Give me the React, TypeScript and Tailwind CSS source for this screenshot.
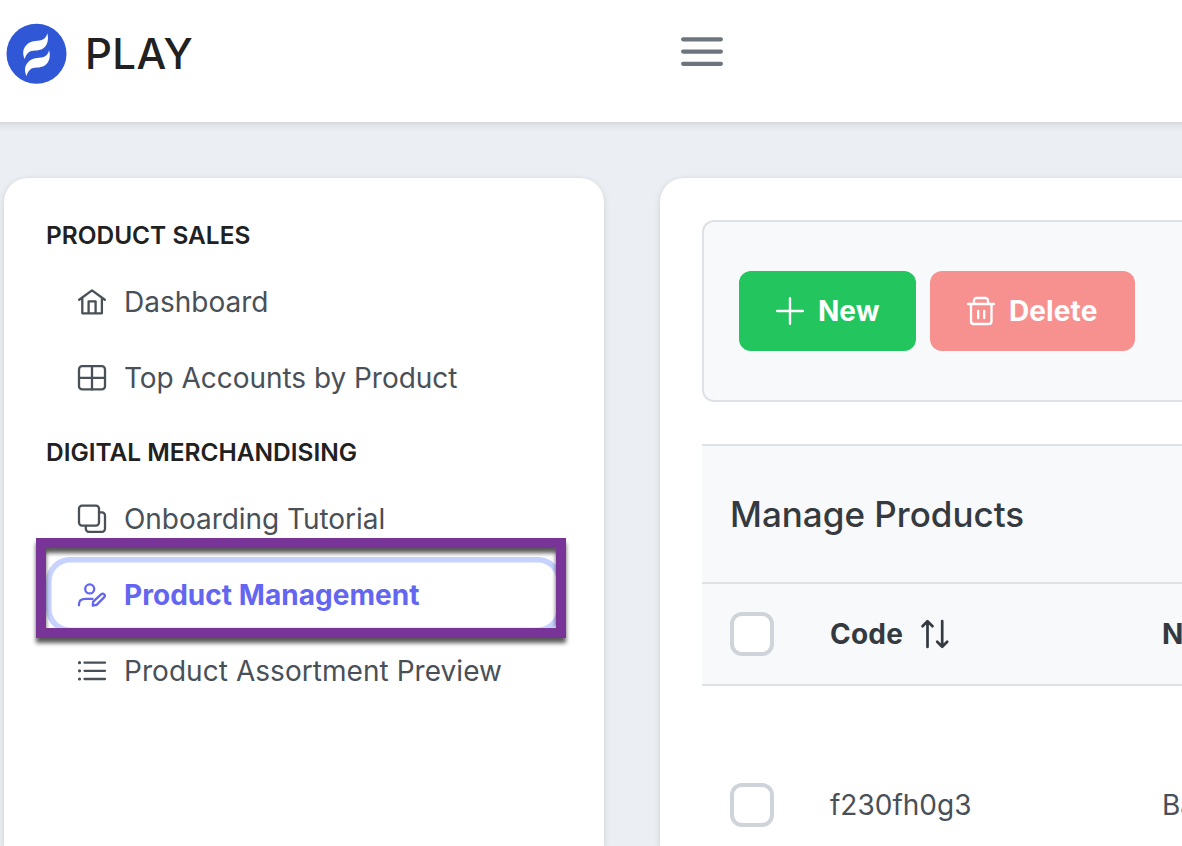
import React from 'react';

type IconProps = { className?: string; children: React.ReactNode };

function Icon({ className = '', children }: IconProps) {
  return (
    <svg
      viewBox="0 0 28 28"
      className={`h-7 w-7 shrink-0 overflow-visible ${className}`}
      fill="none"
      stroke="currentColor"
      strokeWidth="2.3"
      strokeLinecap="round"
      strokeLinejoin="round"
      aria-hidden="true"
    >
      {children}
    </svg>
  );
}

const HomeIcon = () => (
  <Icon>
    <path d="M1.2 11.8 14 2.4l12.8 9.4M4.3 9.8v15.500h19.600V9.800M10.600 25V13.400h7V25" />
  </Icon>
);

const TableIcon = () => (
  <Icon>
    <rect x="1" y="2.2" width="26" height="23.2" rx="3.2" />
    <path d="M14 2.200v23.200M1 13.800h26" />
  </Icon>
);

const CloneIcon = () => (
  <Icon>
    <rect x="1" y="0.6" width="20" height="20" rx="3" />
    <path d="M21 7.400h3a3 3 0 0 1 3 3v13.400a3 3 0 0 1-3 3H10.800a3 3 0 0 1-3-3v-3" />
  </Icon>
);

const UserEditIcon = () => (
  <Icon>
    <circle cx="11.7" cy="7.9" r="4.5" />
    <path d="M1 24.300v-1.200c0-3.400 2.600-5.300 6.600-5.300h7" />
    <path d="m14.800 24.700.4-4.100 7.900-7.300c2.300-1.700 4.800.7 3.200 2.800l-7.700 7.800z" />
  </Icon>
);

const ListIcon = () => (
  <Icon>
    <path d="M6.500 5.700h20.500M6.500 13.800h20.500M6.500 22h20.500" />
    <path d="M1.500 5.700h.01M1.500 13.800h.01M1.500 22h.01" strokeWidth="3.2" />
  </Icon>
);

const PlusIcon = () => (
  <Icon>
    <path d="M14 1.200v25.600M1.200 14h25.600" strokeWidth="2.4" />
  </Icon>
);

const TrashIcon = () => (
  <Icon>
    <path d="M1 7h26M7 7V3.500a2.500 2.500 0 0 1 2.500-2.500h9a2.500 2.500 0 0 1 2.500 2.500V7M4 7v17.200a2.800 2.800 0 0 0 2.800 2.800h14.900a2.800 2.800 0 0 0 2.800-2.800V7M11.200 13.800v7.400M17.200 13.800v7.400" />
  </Icon>
);

const SortIcon = () => (
  <Icon>
    <path d="M6.500 27V1.500M1.500 6.300l5-5 5 5M21.200 1v25.500M16.200 21.700l5 5 5-5" strokeWidth="2.7" />
  </Icon>
);

const flame =
  'M42.3 10.3C44 16 42.5 23 38 25.5C33 28.8 27 26.5 23.5 29.5C21.3 31.3 20.5 33.5 19.7 36C17.5 31 17.5 26 21.5 22C25.5 17.5 31.5 18.3 36 17.3C39.5 16.3 41.5 14 42.3 10.3Z';

function Logo() {
  return (
    <svg viewBox="0 0 62 62" className="h-[62px] w-[62px]" aria-hidden="true">
      <circle cx="31.5" cy="30.8" r="30" fill="#3057d5" />
      <g fill="#fff">
        <path d={flame} />
        <path d={flame} transform="translate(1.8 17)" />
      </g>
    </svg>
  );
}

type Item = { label: string; icon: React.ReactNode; active?: boolean; spacing: string };

const sections: { title: string; items: Item[] }[] = [
  {
    title: 'Product Sales',
    items: [
      { label: 'Dashboard', icon: <HomeIcon />, spacing: 'tracking-normal' },
      { label: 'Top Accounts by Product', icon: <TableIcon />, spacing: 'tracking-[-0.04px]' },
    ],
  },
  {
    title: 'Digital Merchandising',
    items: [
      { label: 'Onboarding Tutorial', icon: <CloneIcon />, spacing: 'tracking-[-0.04px]' },
      { label: 'Product Management', icon: <UserEditIcon />, active: true, spacing: 'tracking-[0.04px]' },
      { label: 'Product Assortment Preview', icon: <ListIcon />, spacing: 'tracking-[0.05px]' },
    ],
  },
];

function MenuItem({ item }: { item: Item }) {
  return (
    <li className="relative">
      <a
        className={`flex h-[76px] items-center gap-[18px] rounded-[24px] pl-8 whitespace-nowrap ${
          item.active
            ? 'font-bold text-[#6366f1] shadow-[inset_0_0_0_5.6px_#c7d2fe]'
            : 'text-[#495057]'
        }`}
      >
        {item.icon}
        <span className={item.spacing}>{item.label}</span>
      </a>
      {item.active && (
        <div className="pointer-events-none absolute -top-[19px] -left-[10px] h-[100px] w-[530px] border-[10px] border-[#783597] drop-shadow-[0_5px_2px_rgba(0,0,0,0.65)]" />
      )}
    </li>
  );
}

function Sidebar() {
  return (
    <aside className="w-[600px] shrink-0 rounded-t-[24px] bg-white px-[42px] pt-[42px] shadow-[0_6px_10px_rgba(0,0,0,0.02),0_0_4px_rgba(0,0,0,0.05),0_2px_8px_rgba(0,0,0,0.08)]">
      {sections.map((s) => (
        <section key={s.title}>
          <h2 className="flex h-[30px] items-center text-[24.45px] font-semibold whitespace-nowrap text-[#212121] uppercase">
            {s.title}
          </h2>
          <ul className="pt-[14px] pb-[21px]">
            {s.items.map((i) => (
              <MenuItem key={i.label} item={i} />
            ))}
          </ul>
        </section>
      ))}
    </aside>
  );
}

const Checkbox = () => (
  <span className="block h-11 w-11 rounded-[12px] border-4 border-[#ced4da] bg-white" />
);

export default function App() {
  return (
    <div className="flex h-[846px] w-[1182px] flex-col overflow-hidden bg-[#ebeff4] font-['Inter',sans-serif] text-[28px] leading-none text-[#495057]">
      <header className="z-10 -mx-4 flex h-[122px] shrink-0 items-start bg-white px-4 shadow-[0_6px_10px_rgba(0,0,0,0.02),0_0_4px_rgba(0,0,0,0.05),0_2px_8px_rgba(0,0,0,0.08)]">
        <div className="flex w-[681px] items-center gap-[18px] pt-[23px] pl-[5px]">
          <Logo />
          <span className="text-[42px] font-[450] tracking-[0.4px] text-[#212121]">PLAY</span>
        </div>
        <button className="mt-[37px] w-[42px]" aria-label="Menu">
          <svg viewBox="0 0 42 30" className="h-[30px] w-[42px]" stroke="#6c757d" strokeWidth="4.2" strokeLinecap="round">
            <path d="M2.100 2.300h37.800M2.100 14.600h37.800M2.100 26.800h37.800" />
          </svg>
        </button>
      </header>

      <div className="flex min-h-0 flex-1 gap-14 pt-14 pl-1">
        <Sidebar />

        <main className="-mr-4 min-w-0 flex-1 rounded-tl-[24px] bg-white pt-[42px] pl-[42px] shadow-[0_6px_10px_rgba(0,0,0,0.02),0_0_4px_rgba(0,0,0,0.05),0_2px_8px_rgba(0,0,0,0.08)]">
          <div className="flex h-[182px] items-center gap-3.5 rounded-l-[12px] border-2 border-r-0 border-[#dee2e6] bg-[#f8f9fb] pl-[35px] font-bold text-white">
            <button className="flex h-20 w-[177px] items-center gap-[14px] rounded-[12px] bg-[#22c55e] pl-[37px]">
              <PlusIcon />
              <span>New</span>
            </button>
            <button className="flex h-20 w-[205px] items-center gap-[14px] rounded-[12px] bg-[#f79190] pl-[37px]">
              <TrashIcon />
              <span className="tracking-[0.1px]">Delete</span>
            </button>
          </div>

          <section className="mt-[42px]">
            <div className="flex h-[138px] items-center border-t-2 border-[#dee2e6] bg-[#f8f9fb] pl-7 text-[35px] font-medium text-[#343a40]">
              Manage Products
            </div>
            <div className="grid h-[104px] grid-cols-[100px_332px_1fr] items-center overflow-hidden border-y-2 border-[#dee2e6] bg-[#f8f9fb] pl-7 font-bold text-[#343a40]">
              <Checkbox />
              <div className="flex items-center gap-[18px]">
                <span className="tracking-[0.2px]">Code</span>
                <SortIcon />
              </div>
              <span>Name</span>
            </div>
            <div className="grid h-[238px] grid-cols-[100px_332px_1fr] items-center overflow-hidden pl-7 whitespace-nowrap">
              <Checkbox />
              <span>f230fh0g3</span>
              <span>Bamboo</span>
            </div>
          </section>
        </main>
      </div>
    </div>
  );
}
